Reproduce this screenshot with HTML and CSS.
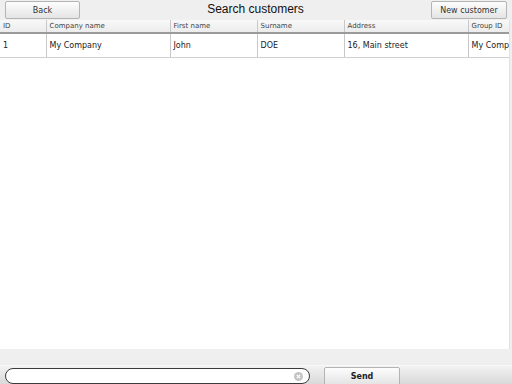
FILE: index.html
```html
<!DOCTYPE html>
<html>
<head>
<meta charset="utf-8">
<link rel="stylesheet" href="styles.css">
</head>
<body>
<div class="app">
  <div class="topbar">
    <button class="btn">Back</button>
    <div class="title">Search customers</div>
    <button class="btn btn-new">New customer</button>
  </div>
  <div class="list">
    <table class="grid">
      <colgroup>
        <col class="c-id"><col class="c-company"><col class="c-first"><col class="c-sur"><col class="c-addr"><col class="c-group">
      </colgroup>
      <thead>
        <tr><th>ID</th><th>Company name</th><th>First name</th><th>Surname</th><th>Address</th><th>Group ID</th></tr>
      </thead>
      <tbody>
        <tr><td>1</td><td>My Company</td><td>John</td><td>DOE</td><td>16, Main street</td><td>My Company</td></tr>
      </tbody>
    </table>
  </div>
  <div class="spacer"></div>
  <div class="bottombar">
    <div class="search">
      <span class="clear"><svg width="9" height="9" viewBox="0 0 9 9"><circle cx="4.5" cy="4.5" r="4.5" fill="#c4c4c4"/><path d="M2.8 2.8L6.2 6.2M6.2 2.8L2.8 6.2" stroke="#fff" stroke-width="1.2"/></svg></span>
    </div>
    <button class="btn btn-send">Send</button>
  </div>
</div>
</body>
</html>
```
FILE: styles.css
```css
html, body {
  margin: 0;
  padding: 0;
}
body {
  width: 512px;
  height: 384px;
  overflow: hidden;
  background: #efefef;
  font-family: "DejaVu Sans", Verdana, sans-serif;
}
.app {
  display: flex;
  flex-direction: column;
  height: 384px;
}
.topbar {
  display: flex;
  align-items: flex-start;
  height: 20px;
  padding: 1px 5px 0 5px;
  box-sizing: border-box;
}
.btn {
  font-family: "DejaVu Sans", Verdana, sans-serif;
  font-size: 8px;
  color: #333;
  height: 18px;
  width: 75px;
  padding: 0;
  border: 1px solid #b4b4b4;
  border-radius: 2px;
  background: linear-gradient(#fdfdfd, #e4e4e4);
}
.btn-new {
  width: 76px;
}
.title {
  flex: 1;
  text-align: center;
  font-family: "Liberation Sans", Arial, sans-serif;
  font-size: 12px;
  line-height: 17px;
  color: #111;
}
.list {
  flex: 1;
  background: #fff;
  margin-right: 2px;
  border-right: 1px solid #e2e2e2;
  overflow: hidden;
}
.grid {
  border-collapse: collapse;
  table-layout: fixed;
  width: 588px;
}
.c-id { width: 46px; }
.c-company { width: 124px; }
.c-first { width: 87px; }
.c-sur { width: 87px; }
.c-addr { width: 124px; }
.c-group { width: 120px; }
.grid th {
  height: 11px;
  padding: 1px 0 0 3px;
  font-size: 7px;
  line-height: 11px;
  font-weight: normal;
  text-align: left;
  color: #444;
  background: linear-gradient(#f8f8f8, #ececec);
  border-left: 1px solid #c8c8c8;
  border-bottom: 2px solid #9a9a9a;
  white-space: nowrap;
  overflow: hidden;
}
.grid th:first-child, .grid td:first-child {
  border-left: none;
}
.grid td {
  height: 23px;
  padding: 0 0 0 3px;
  font-size: 8px;
  color: #222;
  border-left: 1px solid #c8c8c8;
  border-bottom: 1px solid #d0d0d0;
  white-space: nowrap;
  overflow: hidden;
}
.spacer {
  height: 16px;
  background: #efefef;
}
.bottombar {
  height: 19px;
  display: flex;
  align-items: flex-start;
  padding: 1px 0 0 5px;
  box-sizing: border-box;
  border-top: 1px solid #f8f8f8;
  background: linear-gradient(#f2f2f2, #d9d9d9);
  gap: 14px;
}
.search {
  width: 305px;
  height: 16px;
  box-sizing: border-box;
  border: 1.5px solid #3a3a3a;
  border-radius: 8px;
  background: #fff;
  display: flex;
  align-items: center;
  justify-content: flex-end;
  padding-right: 6px;
  margin-top: 1px;
}
.clear {
  display: flex;
}
.btn-send {
  font-weight: bold;
  color: #222;
  width: 76px;
  height: 18px;
  border-radius: 2px 2px 0 0;
}
```
